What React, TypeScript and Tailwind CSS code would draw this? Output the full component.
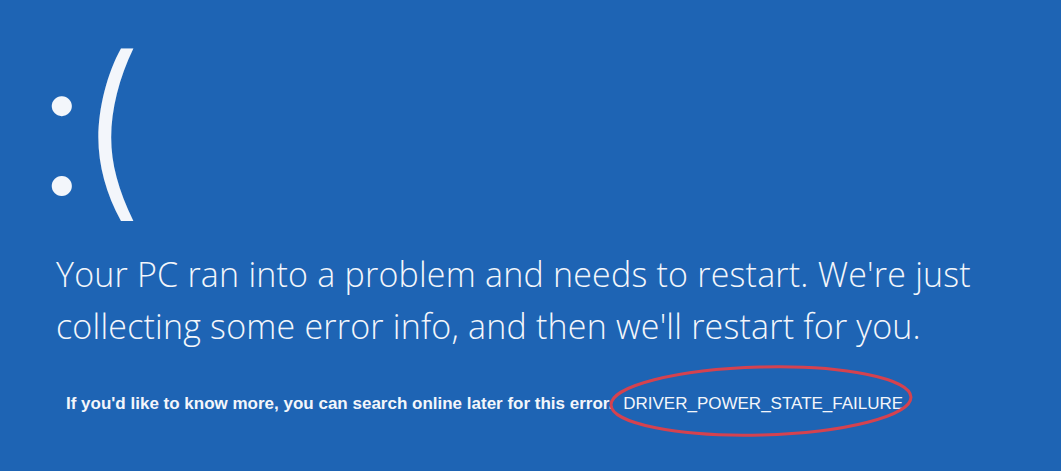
export default function App() {
  return (
    <div className="h-[471px] w-full overflow-hidden bg-[#1e64b4] text-[#f3f6fb]">
      <div className="pl-[35px] pt-[12px]">
        <div
          className="text-[190px] font-light leading-[1.2] tracking-[-11px]"
          style={{ fontFamily: 'Inter, "Open Sans", sans-serif' }}
        >
          :(
        </div>

        <p
          className="mt-[8px] pl-[21px] text-[34px] font-light leading-[52px] tracking-[0.2px]"
          style={{ fontFamily: '"Open Sans", sans-serif' }}
        >
          Your PC ran into a problem and needs to restart. We're just
          <br />
          collecting some error info, and then we'll restart for you.
        </p>

        <div className="mt-[39px] flex items-baseline pl-[31px]">
          <span
            className="text-[17px] font-bold"
            style={{ fontFamily: '"Liberation Sans Narrow", "Liberation Sans", sans-serif' }}
          >
            If you'd like to know more, you can search online later for this error.
          </span>
          <span
            className="relative ml-[10px] text-[17px]"
            style={{ fontFamily: '"Liberation Sans", Arial, sans-serif' }}
          >
            DRIVER_POWER_STATE_FAILURE
            {/* red marker circle drawn over the stop code */}
            <svg
              className="pointer-events-none absolute left-[-16px] top-[-28px]"
              width="308"
              height="76"
              viewBox="0 0 308 76"
            >
              <ellipse
                cx="154"
                cy="38"
                rx="150"
                ry="34"
                fill="none"
                stroke="#d5424f"
                strokeWidth="3"
                transform="rotate(-1.5 154 38)"
              />
            </svg>
          </span>
        </div>
      </div>
    </div>
  );
}
